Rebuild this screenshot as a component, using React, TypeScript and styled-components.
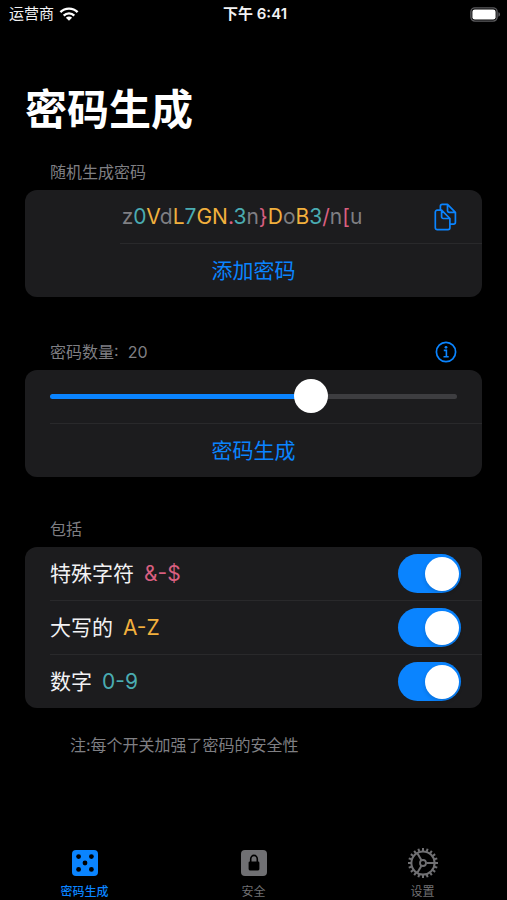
import React, { useState } from "react";
import styled, { createGlobalStyle } from "styled-components";

const color = {
  page: "#000000",
  card: "#1c1c1e",
  divider: "#29292b",
  blue: "#0a84ff",
  text: "#f2f2f4",
  muted: "#7f7f83",
  inactive: "#707073",
  orange: "#f2b03d",
  teal: "#4aacb2",
  pink: "#d95f80",
};

const GlobalStyle = createGlobalStyle`
  *, *::before, *::after { box-sizing: border-box; }
  body {
    margin: 0;
    background: ${color.page};
    color: ${color.text};
    font-family: Inter, "Noto Sans CJK SC", sans-serif;
    -webkit-font-smoothing: antialiased;
  }
  button, input { font: inherit; margin: 0; }
`;

const Screen = styled.div`
  display: flex;
  flex-direction: column;
  min-height: 100vh;
`;

const StatusBar = styled.header`
  display: grid;
  grid-template-columns: 1fr auto 1fr;
  align-items: center;
  height: 28px;
  padding: 0 6px 0 9px;
  font-size: 15px;
  line-height: 20px;
`;

const Carrier = styled.div`
  display: flex;
  align-items: center;
  gap: 5px;
`;

const Clock = styled.time`
  font-weight: 600;
`;

const BatterySlot = styled.div`
  display: flex;
  justify-content: flex-end;
`;

const Content = styled.main`
  flex: 1;
  padding: 54px 25px 16px;
`;

const Title = styled.h1`
  margin: 0;
  color: #fff;
  font-size: 42px;
  font-weight: 700;
  line-height: 56px;
`;

const Section = styled.section<{ $gap: number }>`
  margin-top: ${(p) => p.$gap}px;
`;

const SectionHeader = styled.div`
  display: flex;
  align-items: center;
  justify-content: space-between;
  height: 24px;
  margin-bottom: 6px;
  padding: 0 25px;
`;

const SectionLabel = styled.h2`
  margin: 0;
  color: ${color.muted};
  font-size: 16px;
  font-weight: 400;
  line-height: 24px;
`;

const Card = styled.div`
  overflow: hidden;
  border-radius: 12px;
  background: ${color.card};
`;

const Row = styled.div`
  display: flex;
  align-items: center;
  height: 53px;
  padding: 0 25px;
`;

const Divider = styled.hr<{ $inset: number }>`
  height: 1px;
  margin: 0 0 0 ${(p) => p.$inset}px;
  border: 0;
  background: ${color.divider};
`;

const Password = styled.output`
  flex: 1;
  text-align: center;
  font-size: 21px;
  line-height: 28px;
`;

type Kind = "lower" | "upper" | "digit" | "symbol";

const kindColor: Record<Kind, string> = {
  lower: color.muted,
  upper: color.orange,
  digit: color.teal,
  symbol: color.pink,
};

const Glyph = styled.span<{ $kind: Kind }>`
  color: ${(p) => kindColor[p.$kind]};
`;

const IconButton = styled.button`
  display: flex;
  padding: 0;
  border: 0;
  background: none;
  color: ${color.blue};
  cursor: pointer;
`;

const ActionButton = styled.button`
  display: block;
  width: 100%;
  height: 53px;
  padding: 0;
  border: 0;
  background: none;
  color: ${color.blue};
  font-size: 21px;
  line-height: 28px;
  cursor: pointer;
`;

const Slider = styled.input`
  appearance: none;
  flex: 1;
  min-width: 0;
  height: 34px;
  background: none;

  &::-webkit-slider-runnable-track {
    height: 5px;
    border-radius: 3px;
    background: linear-gradient(
      to right,
      ${color.blue} var(--fill),
      #3d3d40 var(--fill)
    );
  }

  &::-webkit-slider-thumb {
    appearance: none;
    width: 34px;
    height: 34px;
    margin-top: -15px;
    border-radius: 50%;
    background: #fff;
  }
`;

const SwitchRow = styled.label`
  display: flex;
  align-items: center;
  height: 53px;
  padding: 0 21px 0 25px;
  font-size: 21px;
  line-height: 28px;
`;

const Sample = styled.span<{ $kind: Kind }>`
  flex: 1;
  margin-left: 10px;
  color: ${(p) => kindColor[p.$kind]};
`;

const Switch = styled.input`
  appearance: none;
  display: flex;
  align-items: center;
  width: 63px;
  height: 39px;
  padding: 0 2px;
  border-radius: 20px;
  background: #39393d;
  cursor: pointer;

  &::before {
    content: "";
    width: 34px;
    height: 34px;
    border-radius: 50%;
    background: #fff;
    box-shadow: 0 2px 4px rgba(0, 0, 0, 0.15);
  }

  &:checked {
    justify-content: flex-end;
    background: ${color.blue};
  }
`;

const Note = styled.p`
  margin: 25px 45px 0;
  color: ${color.muted};
  font-size: 16px;
  line-height: 24px;
`;

const TabBar = styled.nav`
  display: grid;
  grid-template-columns: repeat(3, 1fr);
`;

const Tab = styled.a<{ $active?: boolean }>`
  display: flex;
  flex-direction: column;
  align-items: center;
  gap: 6px;
  color: ${(p) => (p.$active ? color.blue : color.inactive)};
  font-size: 12px;
  font-weight: ${(p) => (p.$active ? 500 : 400)};
  line-height: 16px;
  text-decoration: none;
`;

const WifiIcon = () => (
  <svg width="20" height="15" viewBox="0 0 20 15" aria-hidden="true">
    <g fill="none" stroke="#fff" strokeWidth="2.4">
      <path d="M1.4 5.2a12.2 12.2 0 0 1 17.2 0" />
      <path d="M4.7 8.6a7.5 7.5 0 0 1 10.6 0" />
    </g>
    <path d="M10 13.8 6.9 10.7a4.4 4.4 0 0 1 6.2 0z" fill="#fff" />
  </svg>
);

const BatteryIcon = () => (
  <svg width="31" height="15" viewBox="0 0 31 15" aria-hidden="true">
    <rect x="0.9" y="0.9" width="26.2" height="13.2" rx="4" fill="none" stroke="#5b5b5e" strokeWidth="1.4" />
    <rect x="2.4" y="2.4" width="23.2" height="10.2" rx="2.4" fill="#fff" />
    <path d="M28.4 5.3c2.2.6 2.2 3.8 0 4.4z" fill="#5b5b5e" />
  </svg>
);

const CopyIcon = () => (
  <svg width="23" height="28" viewBox="0 0 23 28" fill="none" stroke="currentColor" strokeWidth="1.7" strokeLinejoin="round" aria-hidden="true">
    <path d="M7.6 7.2H3.2a1.9 1.9 0 0 0-1.9 1.9v15.6a1.9 1.9 0 0 0 1.9 1.9H14a1.9 1.9 0 0 0 1.9-1.9V15.5L7.6 7.2v6.6a1.7 1.7 0 0 0 1.7 1.7h6.6" />
    <path d="M6.4 7V3.2a1.8 1.8 0 0 1 1.8-1.8h5.3l7.9 7.9v9.9a1.9 1.9 0 0 1-1.9 1.9H16M13.5 1.4v6.2a1.7 1.7 0 0 0 1.7 1.7h6.2" />
  </svg>
);

const InfoIcon = () => (
  <svg width="22" height="22" viewBox="0 0 22 22" fill="none" stroke="currentColor" aria-hidden="true">
    <circle cx="11" cy="11" r="9.6" strokeWidth="1.7" />
    <path d="M8.8 9.4h2.6v6M8.5 15.7h5.2" strokeWidth="1.6" />
    <circle cx="11" cy="6.3" r="1.4" fill="currentColor" stroke="none" />
  </svg>
);

const DiceIcon = () => (
  <svg width="30" height="30" viewBox="0 0 30 30" aria-hidden="true">
    <rect x="2" y="2" width="26" height="26" rx="4" fill="currentColor" />
    <g fill="#000">
      <circle cx="8.6" cy="8.6" r="2.4" />
      <circle cx="21.4" cy="8.6" r="2.4" />
      <circle cx="15" cy="15" r="2.4" />
      <circle cx="8.6" cy="21.4" r="2.4" />
      <circle cx="21.4" cy="21.4" r="2.4" />
    </g>
  </svg>
);

const LockIcon = () => (
  <svg width="30" height="30" viewBox="0 0 30 30" aria-hidden="true">
    <rect x="2" y="2" width="26" height="26" rx="4" fill="currentColor" />
    <rect x="9.6" y="13.4" width="10.8" height="9" rx="1.3" fill="#000" />
    <path d="M11.7 14v-2.9a3.3 3.7 0 0 1 6.6 0V14" fill="none" stroke="#000" strokeWidth="1.6" />
  </svg>
);

const teeth = Array.from({ length: 20 }, (_, i) => i * 18);

const GearIcon = () => (
  <svg width="32" height="30" viewBox="-16 -15 32 30" fill="none" stroke="currentColor" aria-hidden="true">
    <circle r="11.6" strokeWidth="2" />
    {teeth.map((angle) => (
      <path key={angle} d="M12 0h3" strokeWidth="2" transform={`rotate(${angle})`} />
    ))}
    <circle r="3" strokeWidth="1.8" />
    {[0, 120, 240].map((angle) => (
      <path key={angle} d="M3.4 0H11" strokeWidth="2" transform={`rotate(${angle})`} />
    ))}
  </svg>
);

const password = "z0VdL7GN.3n}DoB3/n[u";

const kindOf = (char: string): Kind => {
  if (/[a-z]/.test(char)) return "lower";
  if (/[A-Z]/.test(char)) return "upper";
  if (/[0-9]/.test(char)) return "digit";
  return "symbol";
};

const options: { name: string; sample: string; kind: Kind }[] = [
  { name: "特殊字符", sample: "&-$", kind: "symbol" },
  { name: "大写的", sample: "A-Z", kind: "upper" },
  { name: "数字", sample: "0-9", kind: "digit" },
];

const MIN = 1;
const MAX = 30;

export default function App() {
  const [length, setLength] = useState(20);
  const ratio = (length - MIN) / (MAX - MIN);
  const fill = { "--fill": `calc(17px + (100% - 34px) * ${ratio})` } as React.CSSProperties;

  return (
    <Screen lang="zh-CN">
      <GlobalStyle />
      <StatusBar>
        <Carrier>
          运营商
          <WifiIcon />
        </Carrier>
        <Clock>下午 6:41</Clock>
        <BatterySlot>
          <BatteryIcon />
        </BatterySlot>
      </StatusBar>

      <Content>
        <Title>密码生成</Title>

        <Section $gap={22}>
          <SectionHeader>
            <SectionLabel>随机生成密码</SectionLabel>
          </SectionHeader>
          <Card>
            <Row>
              <Password>
                {[...password].map((char, i) => (
                  <Glyph key={i} $kind={kindOf(char)}>
                    {char}
                  </Glyph>
                ))}
              </Password>
              <IconButton type="button" aria-label="复制">
                <CopyIcon />
              </IconButton>
            </Row>
            <Divider $inset={95} />
            <ActionButton type="button">添加密码</ActionButton>
          </Card>
        </Section>

        <Section $gap={43}>
          <SectionHeader>
            <SectionLabel as="label" htmlFor="length">
              密码数量:&nbsp; {length}
            </SectionLabel>
            <IconButton type="button" aria-label="信息">
              <InfoIcon />
            </IconButton>
          </SectionHeader>
          <Card>
            <Row>
              <Slider
                id="length"
                type="range"
                min={MIN}
                max={MAX}
                value={length}
                style={fill}
                onChange={(e) => setLength(Number(e.target.value))}
              />
            </Row>
            <Divider $inset={25} />
            <ActionButton type="button">密码生成</ActionButton>
          </Card>
        </Section>

        <Section $gap={40}>
          <SectionHeader>
            <SectionLabel>包括</SectionLabel>
          </SectionHeader>
          <Card>
            {options.map((option, i) => (
              <React.Fragment key={option.name}>
                {i > 0 && <Divider $inset={25} />}
                <SwitchRow>
                  {option.name}
                  <Sample $kind={option.kind}>{option.sample}</Sample>
                  <Switch type="checkbox" role="switch" defaultChecked />
                </SwitchRow>
              </React.Fragment>
            ))}
          </Card>
          <Note>注:每个开关加强了密码的安全性</Note>
        </Section>
      </Content>

      <TabBar>
        <Tab href="#generate" $active aria-current="page">
          <DiceIcon />
          密码生成
        </Tab>
        <Tab href="#security">
          <LockIcon />
          安全
        </Tab>
        <Tab href="#settings">
          <GearIcon />
          设置
        </Tab>
      </TabBar>
    </Screen>
  );
}
